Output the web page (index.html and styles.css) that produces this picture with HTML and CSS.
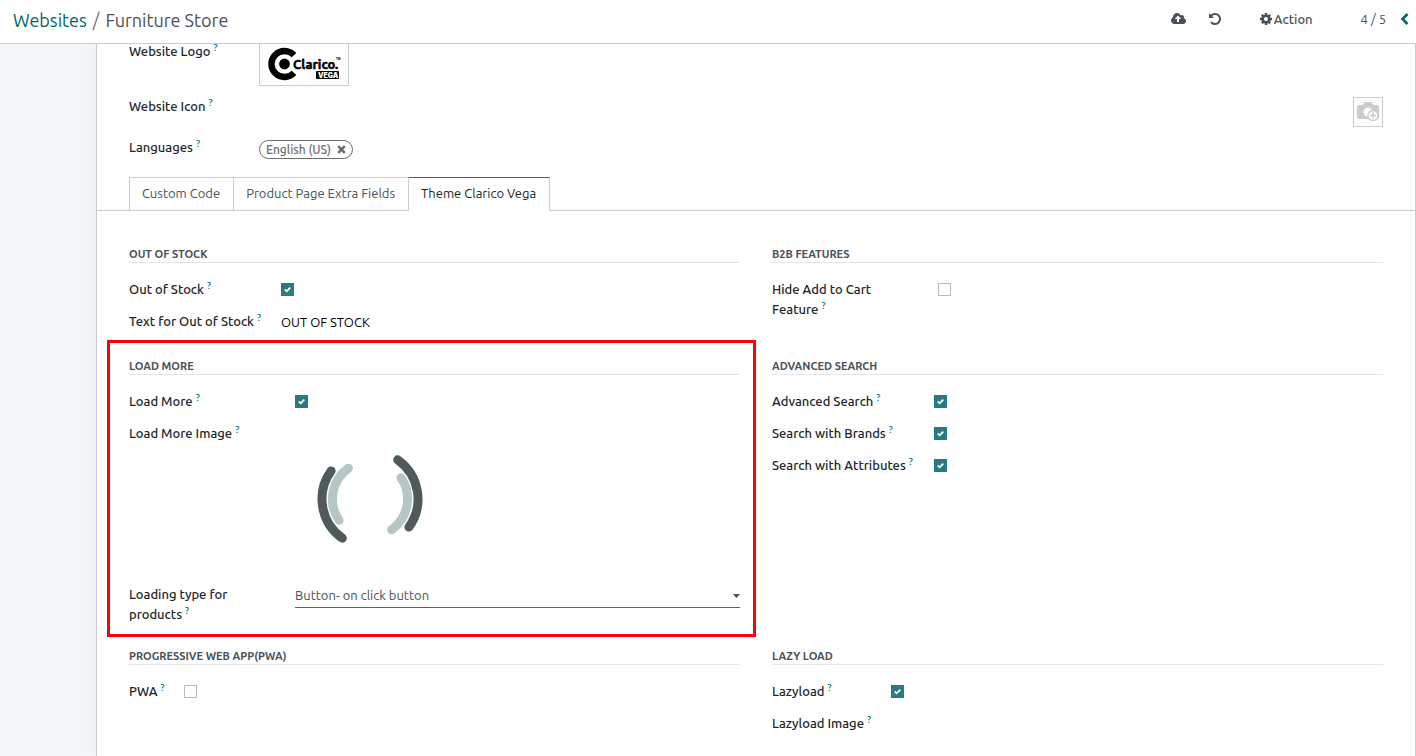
FILE: index.html
```html
<!DOCTYPE html>
<html lang="en">
<head>
<meta charset="utf-8">
<title>Furniture Store</title>
<link rel="stylesheet" href="styles.css">
</head>
<body>
<header class="topbar">
  <nav class="crumbs"><a href="#">Websites</a><span class="slash">/</span><span>Furniture Store</span></nav>
  <div class="tools">
    <button class="tool tool-save" aria-label="Save"><svg width="15" height="14" viewBox="0 0 1920 1792"><path d="M1280 864q0-14-9-23l-352-352q-9-9-23-9t-23 9l-351 351q-10 12-10 24 0 14 9 23t23 9h224v352q0 13 9.500 22.500t22.500 9.500h192q13 0 22.500-9.500t9.500-22.500v-352h224q13 0 22.500-9.500t9.500-22.500zm640 288q0 159-112.500 271.500t-271.500 112.500h-1088q-185 0-316.500-131.500t-131.500-316.500q0-130 70-240t188-165q-2-30-2-43 0-212 150-362t362-150q156 0 285.500 87t188.500 231q71-62 166-62 106 0 181 75t75 181q0 76-41 138 130 31 213.500 135.500t83.500 238.500z"/></svg></button>
    <button class="tool tool-undo" aria-label="Discard"><svg width="14" height="14" viewBox="0 0 1792 1792"><path d="M1664 896q0 156-61 298t-164 245-245 164-298 61q-172 0-327-72.500t-264-204.500q-7-10-6.500-22.500t8.500-20.500l137-138q10-9 25-9 16 2 23 12 73 95 179 147t225 52q104 0 198.500-40.500t163.500-109.500 109.500-163.500 40.500-198.500-40.500-198.500-109.500-163.500-163.500-109.500-198.500-40.500q-98 0-188 35.500t-160 101.500l137 138q31 30 14 69-17 40-59 40h-448q-26 0-45-19t-19-45v-448q0-42 40-59 39-17 69 14l130 129q107-101 244.500-156.500t284.500-55.500q156 0 298 61t245 164 164 245 61 298z"/></svg></button>
    <button class="tool tool-action"><svg width="14" height="14" viewBox="0 0 1792 1792"><path d="M1152 896q0-106-75-181t-181-75-181 75-75 181 75 181 181 75 181-75 75-181zm512-109v222q0 12-8 23t-20 13l-185 28q-19 54-39 91 35 50 107 138 10 12 10 25t-9 23q-27 37-99 108t-94 71q-12 0-26-9l-138-108q-44 23-91 38-16 136-29 186-7 28-36 28h-222q-14 0-24.500-8.500t-11.500-21.500l-28-184q-49-16-90-37l-141 107q-10 9-25 9-14 0-25-11-126-114-165-168-7-10-7-23 0-12 8-23 15-21 51-66.500t54-70.500q-27-50-41-99l-183-27q-13-2-21-12.500t-8-23.500v-222q0-12 8-23t19-13l186-28q14-46 39-92-40-57-107-138-10-12-10-24 0-10 9-23 26-36 98.500-107.500t94.500-71.500q13 0 26 10l138 107q44-23 91-38 16-136 29-186 7-28 36-28h222q14 0 24.500 8.500t11.500 21.500l28 184q49 16 90 37l142-107q9-9 24-9 13 0 25 10 129 119 165 170 7 8 7 22 0 12-8 23-15 21-51 66.500t-54 70.500q26 50 41 98l183 28q13 2 21 12.500t8 23.500z"/></svg>Action</button>
    <span class="pager">4 / 5</span>
    <button class="tool tool-prev" aria-label="Previous"><svg width="9" height="12" viewBox="0 0 9 12"><path d="M7.500 1 2.500 6l5 5" fill="none" stroke="currentColor" stroke-width="2.600"/></svg></button>
  </div>
</header>
<main class="page">
  <form class="sheet">
    <section class="details">
      <div class="detail detail-logo">
        <span class="label">Website Logo <sup>?</sup></span>
        <div class="logo-frame">
          <svg width="88" height="41" viewBox="260 44 88 41" role="img" aria-label="Clarico Vega">
            <path d="M294 55.200A13 13 0 1 0 294 72.800" fill="none" stroke="#000" stroke-width="6.400"/>
            <circle cx="284.500" cy="64" r="5.400"/>
            <text class="logo-name" x="293" y="69">Clarico.</text>
            <text class="logo-tm" x="336" y="60">TM</text>
            <rect x="316" y="71" width="23" height="8" rx="1"/>
            <text class="logo-sub" x="318" y="78">VEGA</text>
          </svg>
        </div>
      </div>
      <div class="detail detail-icon">
        <span class="label">Website Icon <sup>?</sup></span>
        <button type="button" class="camera" aria-label="Upload icon"><svg width="24" height="22" viewBox="0 0 24 22">
          <path fill="#ccc" d="M3 4h3.500l1.500-2.500q.4-.5 1-.5h6q.6 0 1 .5L17.500 4H21q2 0 2 2v10q0 2-2 2H3q-2 0-2-2V6q0-2 2-2z"/>
          <circle cx="12" cy="11" r="4.500" fill="#fff"/>
          <circle cx="17" cy="14.500" r="5" fill="#fff" stroke="#ccc" stroke-width="1.400"/>
          <path d="M17 11.500v6M14 14.500h6" stroke="#ccc" stroke-width="1.600"/>
        </svg></button>
      </div>
      <div class="detail detail-lang">
        <span class="label">Languages <sup>?</sup></span>
        <span class="tag">English (US)<button type="button" aria-label="Remove English (US)"><svg width="9" height="9" viewBox="0 0 9 9"><path d="m1.200 1.200 6.600 6.600m0-6.600L1.200 7.800" stroke="currentColor" stroke-width="2.600"/></svg></button></span>
      </div>
    </section>
    <div class="tabs" role="tablist">
      <button type="button" class="tab" role="tab">Custom Code</button>
      <button type="button" class="tab" role="tab">Product Page Extra Fields</button>
      <button type="button" class="tab tab-active" role="tab" aria-selected="true">Theme Clarico Vega</button>
    </div>
    <div class="groups">
      <section class="group group-stock">
        <h2>Out of Stock</h2>
        <div class="row"><label for="oos">Out of Stock <sup>?</sup></label><input type="checkbox" id="oos" checked></div>
        <div class="row"><label for="oostext">Text for Out of Stock <sup>?</sup></label><input type="text" id="oostext" value="OUT OF STOCK"></div>
      </section>
      <section class="group group-b2b">
        <h2>B2B Features</h2>
        <div class="row"><label for="hide">Hide Add to Cart Feature <sup>?</sup></label><input type="checkbox" id="hide"></div>
      </section>
      <section class="group group-load">
        <h2>Load More</h2>
        <div class="row"><label for="more">Load More <sup>?</sup></label><input type="checkbox" id="more" checked></div>
        <div class="row"><span class="label">Load More Image <sup>?</sup></span>
          <svg class="spinner" width="150" height="150" viewBox="-75 -75 150 150" fill="none" stroke-width="9" stroke-linecap="round" role="img" aria-label="Loading">
            <g stroke="#4f5a5b"><path d="M27.700-39.200A48 48 0 0 1 38.900 28.100"/><path d="M-27.700 39.200A48 48 0 0 1-38.900-28.100"/></g>
            <g stroke="#b4c6c5"><path d="M31-21.200A37.500 37.500 0 0 1 21.600 30.700"/><path d="M-31 21.200A37.500 37.500 0 0 1-21.600-30.700"/></g>
          </svg></div>
        <div class="row"><label for="ltype">Loading type for products <sup>?</sup></label><select id="ltype"><option>Button- on click button</option></select></div>
      </section>
      <section class="group group-search">
        <h2>Advanced Search</h2>
        <div class="row"><label for="adv">Advanced Search <sup>?</sup></label><input type="checkbox" id="adv" checked></div>
        <div class="row"><label for="brands">Search with Brands <sup>?</sup></label><input type="checkbox" id="brands" checked></div>
        <div class="row"><label for="attrs">Search with Attributes <sup>?</sup></label><input type="checkbox" id="attrs" checked></div>
      </section>
      <section class="group group-pwa">
        <h2>Progressive Web App(PWA)</h2>
        <div class="row"><label for="pwa">PWA <sup>?</sup></label><input type="checkbox" id="pwa"></div>
      </section>
      <section class="group group-lazy">
        <h2>Lazy Load</h2>
        <div class="row"><label for="lazy">Lazyload <sup>?</sup></label><input type="checkbox" id="lazy" checked></div>
        <div class="row"><span class="label">Lazyload Image <sup>?</sup></span></div>
      </section>
    </div>
  </form>
</main>
</body>
</html>
```
FILE: styles.css
```css
* { box-sizing: border-box; }
body {
  margin: 0;
  min-height: 100vh;
  display: flex;
  flex-direction: column;
  font: 13px/20px Ubuntu, "Noto Sans", sans-serif;
  color: #495057;
  background: #f5f6fa;
}
button, input, select { font: inherit; color: inherit; }
button { border: 0; padding: 0; background: none; cursor: pointer; }
svg { display: block; }

.topbar {
  height: 44px;
  padding: 0 7px 4px 13px;
  display: flex;
  align-items: center;
  justify-content: space-between;
  background: #fff;
  border-bottom: 1px solid #c9ccd2;
}
.crumbs { display: flex; gap: 6px; font-size: 18px; line-height: 24px; }
.crumbs a { color: #01666b; text-decoration: none; }
.slash { color: #6c757d; }
.tools { display: flex; align-items: center; padding-bottom: 2px; }
.tool { display: flex; align-items: center; gap: 1px; font-weight: 500; }
.tool svg { fill: currentColor; }
.tool-undo { margin-left: 22px; }
.tool-action { margin-left: 37px; }
.pager { margin-left: 48px; }
.tool-prev { margin-left: 14px; color: #01666b; }

.page { flex: 1; display: flex; padding-left: 96px; }
.sheet {
  flex: 1;
  background: #fff;
  border: solid #c9ccd2;
  border-width: 0 1px;
  box-shadow: 0 0 20px rgba(0, 0, 0, .05);
  clip-path: inset(0 0 0 -24px);
}
.details { padding: 0 32px; }
.detail { display: grid; grid-template-columns: 130px 1fr; }
label, .label { font-weight: 500; color: #212529; }
sup { font-size: 10px; line-height: 0; color: #01777d; vertical-align: 5px; }
.detail-logo { height: 42px; }
.detail-logo .label { margin-top: -3px; }
.logo-frame { justify-self: start; border: solid #c9ccd2; border-width: 0 1px 1px; }
.logo-name { font: 700 13px Ubuntu, "Open Sans", sans-serif; stroke: #000; stroke-width: .5px; }
.logo-tm { font: 700 3px "Open Sans", sans-serif; }
.logo-sub { font: 900 7px Inter, sans-serif; fill: #fff; }
.detail-icon { padding-top: 10px; height: 51px; }
.camera {
  justify-self: end;
  width: 30px;
  height: 30px;
  margin-top: 1px;
  display: grid;
  place-items: center;
  border: 1px solid #c9ccd2;
}
.tag {
  justify-self: start;
  display: flex;
  align-items: center;
  gap: 6px;
  height: 19px;
  margin-top: 3px;
  padding: 0 6px;
  border: 1px solid #6c6c6c;
  border-radius: 10px;
  font-size: 12px;
  font-weight: 500;
  color: #6c6c6c;
}

.tabs {
  display: flex;
  margin-top: 18px;
  padding-left: 32px;
  border-bottom: 1px solid #c9ccd2;
}
.tab {
  height: 33px;
  padding: 0 13px 2px 12px;
  border: solid #c9ccd2;
  border-width: 1px 0 0 1px;
}
.tab-active {
  height: 34px;
  margin-bottom: -1px;
  padding-bottom: 4px;
  background: #fff;
  color: #212529;
  border-right-width: 1px;
  border-top-color: #714b67;
}

.groups {
  display: grid;
  grid-template-columns: 1fr 1fr;
  column-gap: 32px;
  padding: 33px 32px 0;
}
.group { position: relative; min-height: 112px; padding-bottom: 16px; }
.group h2 {
  margin: 0 0 10px;
  padding-top: 2px;
  font-size: 11px;
  line-height: 16px;
  font-weight: 700;
  text-transform: uppercase;
  border-bottom: 1px solid #e4e5e8;
}
.row {
  display: grid;
  grid-template-columns: var(--label) 1fr;
  align-items: start;
  padding: 6px 0;
}
.row label, .row .label { padding-right: 12px; }
.group-b2b .row label { padding-right: 24px; }
.group-stock { --label: 152px; }
.group-load, .group-b2b { --label: 166px; }
.group-search { --label: 162px; }
.group-pwa { --label: 55px; }
.group-lazy { --label: 119px; }
.group-load::after {
  content: "";
  position: absolute;
  inset: -16px -16px 9px -22px;
  border: 3px solid #f00;
  pointer-events: none;
}
input[type="checkbox"] {
  appearance: none;
  width: 13px;
  height: 13px;
  margin: 4px 0 0;
  border: 1px solid #b9bbbe;
  background: #fff;
}
input[type="checkbox"]:checked {
  border-color: #267c82;
  background: #267c82 url("data:image/svg+xml,%3Csvg xmlns='http://www.w3.org/2000/svg' viewBox='0 0 11 11'%3E%3Cpath d='M2.800 5.500 4.700 7.300 8.300 3.700' fill='none' stroke='white' stroke-width='1.800'/%3E%3C/svg%3E");
}
input[type="text"] {
  width: 100%;
  height: 20px;
  margin-top: 1px;
  padding: 0;
  border: 0;
  background: none;
  color: #000;
}
.spinner { margin: 1px 0 -2px; }
select {
  appearance: none;
  width: 100%;
  height: 24px;
  padding: 0 0 2px;
  border: 0;
  border-bottom: 1px solid #267c82;
  border-radius: 0;
  background: url("data:image/svg+xml,%3Csvg xmlns='http://www.w3.org/2000/svg' viewBox='0 0 7 4'%3E%3Cpath d='M0 0h7L3.500 4z' fill='%23495057'/%3E%3C/svg%3E") right center / 7px 4px no-repeat;
}
```
